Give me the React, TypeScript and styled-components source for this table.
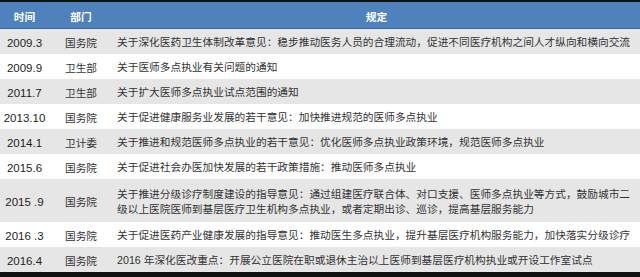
import React from 'react';
import styled, { createGlobalStyle } from 'styled-components';

const GlobalStyle = createGlobalStyle`
  html, body {
    margin: 0;
    padding: 0;
    background: #fff;
  }
  body {
    font-family: "Liberation Sans", "Noto Sans CJK SC", sans-serif;
  }
`;

const rows = [
  { time: '2009.3', dept: '国务院', rule: '关于深化医药卫生体制改革意见：稳步推动医务人员的合理流动，促进不同医疗机构之间人才纵向和横向交流' },
  { time: '2009.9', dept: '卫生部', rule: '关于医师多点执业有关问题的通知' },
  { time: '2011.7', dept: '卫生部', rule: '关于扩大医师多点执业试点范围的通知' },
  { time: '2013.10', dept: '国务院', rule: '关于促进健康服务业发展的若干意见：加快推进规范的医师多点执业' },
  { time: '2014.1', dept: '卫计委', rule: '关于推进和规范医师多点执业的若干意见：优化医师多点执业政策环境，规范医师多点执业' },
  { time: '2015.6', dept: '国务院', rule: '关于促进社会办医加快发展的若干政策措施：推动医师多点执业' },
  { time: '2015 .9', dept: '国务院', rule: '关于推进分级诊疗制度建设的指导意见：通过组建医疗联合体、对口支援、医师多点执业等方式，鼓励城市二级以上医院医师到基层医疗卫生机构多点执业，或者定期出诊、巡诊，提高基层服务能力' },
  { time: '2016 .3', dept: '国务院', rule: '关于促进医药产业健康发展的指导意见：推动医生多点执业，提升基层医疗机构服务能力，加快落实分级诊疗' },
  { time: '2016.4', dept: '国务院', rule: '2016 年深化医改重点：开展公立医院在职或退休主治以上医师到基层医疗机构执业或开设工作室试点' },
];

const Table = styled.div`
  width: 640px;
  border-top: 2px solid #111;
  border-bottom: 5px solid #111;
`;

const HeaderRow = styled.div`
  display: grid;
  grid-template-columns: 49px 64px 1fr;
  height: 26px;
  background: #4f81bd;
  border-bottom: 1px solid #35679f;
`;

const HeadCell = styled.div`
  display: flex;
  align-items: center;
  justify-content: center;
  padding-top: 2px;
  color: #fff;
  font-family: "Noto Sans CJK SC", sans-serif;
  font-weight: 700;
  font-size: 10.7px;
`;

const Row = styled.div<{ $shade: boolean; $tall?: boolean }>`
  display: grid;
  grid-template-columns: 49px 64px 1fr;
  min-height: ${(p) => (p.$tall ? '43px' : '25px')};
  background: ${(p) => (p.$shade ? '#e6e6e6' : '#ffffff')};
`;

const TimeCell = styled.div`
  display: flex;
  align-items: center;
  justify-content: center;
  padding-top: 2px;
  font-size: 11.5px;
  color: #1e1e1e;
  white-space: nowrap;
`;

const DeptCell = styled.div`
  display: flex;
  align-items: center;
  justify-content: center;
  padding-top: 2px;
  font-family: "Noto Sans CJK SC", sans-serif;
  font-size: 10.7px;
  color: #333;
`;

const RuleCell = styled.div`
  display: flex;
  align-items: center;
  padding: 2px 4px 0 4px;
  font-size: 10.7px;
  line-height: 14.5px;
  color: #333;
`;

export default function App() {
  return (
    <>
      <GlobalStyle />
      <Table>
        <HeaderRow>
          <HeadCell>时间</HeadCell>
          <HeadCell>部门</HeadCell>
          <HeadCell>规定</HeadCell>
        </HeaderRow>
        {rows.map((r, i) => (
          <Row key={r.time + i} $shade={i % 2 === 0} $tall={r.rule.length > 60}>
            <TimeCell>{r.time}</TimeCell>
            <DeptCell>{r.dept}</DeptCell>
            <RuleCell>{r.rule}</RuleCell>
          </Row>
        ))}
      </Table>
    </>
  );
}
